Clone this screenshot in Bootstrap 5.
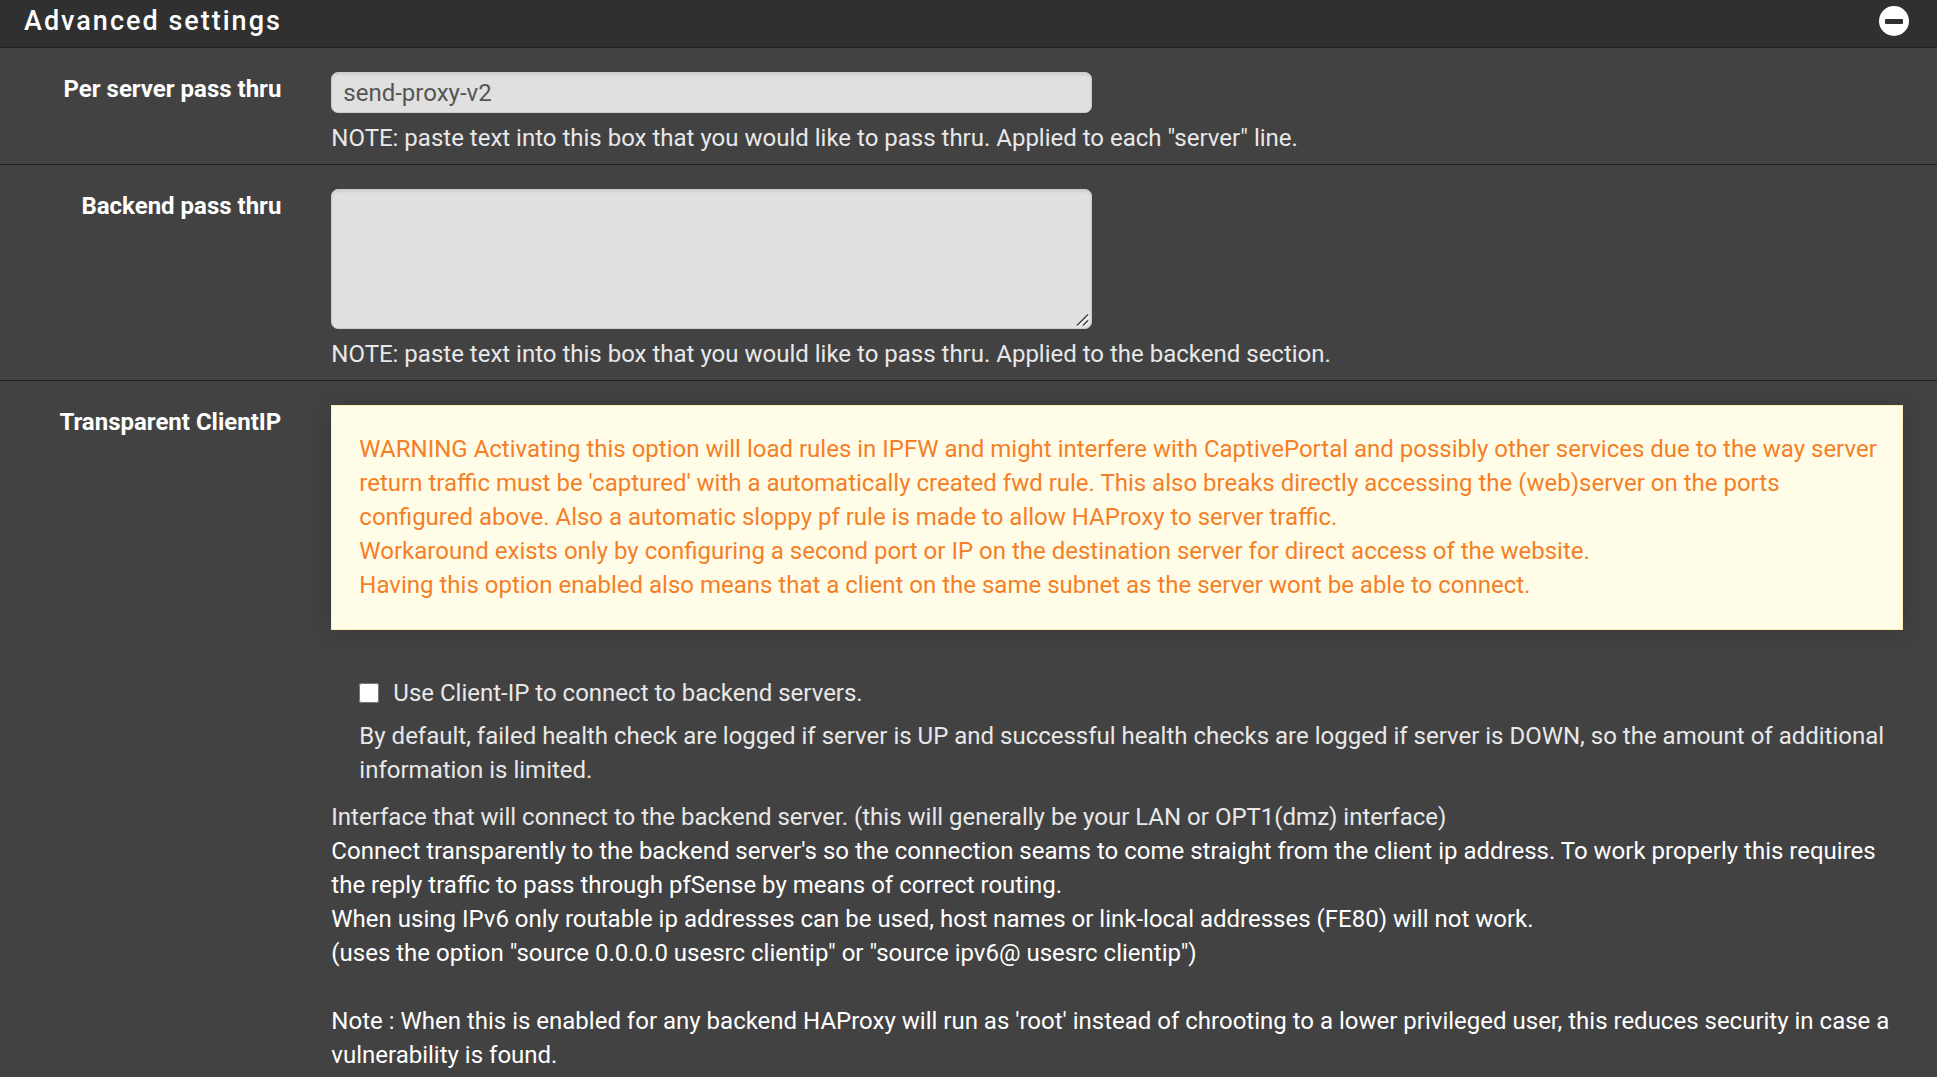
<!DOCTYPE html>
<html lang="en">
<head>
<meta charset="utf-8">
<meta name="viewport" content="width=device-width, initial-scale=1">
<title>Advanced settings</title>
<link href="https://cdn.jsdelivr.net/npm/bootstrap@5.3.0/dist/css/bootstrap.min.css" rel="stylesheet">
<style>
  body {
    background: #424242;
    color: #fff;
    font-family: Roboto, "Liberation Sans", sans-serif;
    font-size: 24px;
    line-height: 34px;
  }
  .panel-head {
    background: #303030;
    border-bottom: 1px solid #212121;
    height: 48px;
    padding: 0 28px 6px 24px;
  }
  .panel-head h2 {
    font-size: 27px;
    font-weight: 500;
    letter-spacing: 2px;
    line-height: 34px;
  }
  .collapse-toggle { line-height: 0; }
  .setting { padding: 24px 34px 9px 7px; }
  .setting + .setting { border-top: 1px solid #212121; }
  .setting:last-child { padding-bottom: 0; }
  .setting .row { --bs-gutter-x: 50px; }
  .setting-label { font-weight: 700; }
  .field {
    background: #e0e0e0;
    border: 1px solid #ccc;
    border-radius: 7px;
    box-shadow: inset 0 2px 2px rgba(0, 0, 0, .08);
    color: #555;
    font-size: 24px;
    height: 41px;
    line-height: 34px;
    padding: 2px 11px;
  }
  .field:focus { background: #e0e0e0; color: #555; }
  .field-tall { height: 140px; resize: both; }
  .field-tall::-webkit-resizer {
    background: url("data:image/svg+xml,%3Csvg xmlns='http://www.w3.org/2000/svg' width='15' height='15' fill='none' stroke-width='1.5'%3E%3Cpath stroke='%23fff' d='M2 13.5L13 3M8 13.5L13 9'/%3E%3Cpath stroke='%23444' d='M1 12.5L12 1.5M7 12.5L12 7.5'/%3E%3C/svg%3E") no-repeat;
  }
  .hint { color: #e8e8e8; }
  .hint-below { margin-top: 8px; }
  .warn-box {
    background: #fffde7;
    border: 1px solid #ffecb3;
    border-radius: 0;
    box-shadow: 0 2px 20px rgba(0, 0, 0, .15);
    color: #f57f27;
    margin-bottom: 46px;
    padding: 26px 22px 27px 27px;
  }
  .option { padding-left: 28px; margin-bottom: 13px; }
  .option-line { gap: 14px; margin-bottom: 9px; }
  .option-line input { height: 20px; width: 20px; }
</style>
<script src="https://cdn.jsdelivr.net/npm/bootstrap@5.3.0/dist/js/bootstrap.bundle.min.js" defer></script>
</head>
<body>
<section>
  <header class="panel-head d-flex align-items-center justify-content-between">
    <h2 class="m-0">Advanced settings</h2>
    <button type="button" class="collapse-toggle btn p-0 border-0" data-bs-toggle="collapse" data-bs-target="#advanced" aria-expanded="true" aria-controls="advanced" aria-label="Collapse advanced settings">
      <svg width="30" height="30" viewBox="0 0 30 30" aria-hidden="true">
        <circle cx="15" cy="15" r="15" fill="#fff"/>
        <rect x="6" y="13" width="18" height="5" rx="1" fill="#303030"/>
      </svg>
    </button>
  </header>
  <form id="advanced" class="collapse show">
    <div class="setting">
      <div class="row">
        <label class="setting-label col-2 text-end" for="server-pass">Per server pass thru</label>
        <div class="col-10">
          <div class="row">
            <div class="col-6"><input id="server-pass" class="field form-control" type="text" value="send-proxy-v2"></div>
          </div>
          <div class="hint hint-below">NOTE: paste text into this box that you would like to pass thru. Applied to each "server" line.</div>
        </div>
      </div>
    </div>
    <div class="setting">
      <div class="row">
        <label class="setting-label col-2 text-end" for="backend-pass">Backend pass thru</label>
        <div class="col-10">
          <div class="row">
            <div class="col-6"><textarea id="backend-pass" class="field field-tall form-control d-block"></textarea></div>
          </div>
          <div class="hint hint-below">NOTE: paste text into this box that you would like to pass thru. Applied to the backend section.</div>
        </div>
      </div>
    </div>
    <div class="setting">
      <div class="row">
        <div class="setting-label col-2 text-end">Transparent ClientIP</div>
        <div class="col-10">
          <div class="warn-box alert" role="alert">
            WARNING Activating this option will load rules in IPFW and might interfere with CaptivePortal and possibly other services due to the way server return traffic must be 'captured' with a automatically created fwd rule. This also breaks directly accessing the (web)server on the ports configured above. Also a automatic sloppy pf rule is made to allow HAProxy to server traffic.<br>
            Workaround exists only by configuring a second port or IP on the destination server for direct access of the website.<br>
            Having this option enabled also means that a client on the same subnet as the server wont be able to connect.
          </div>
          <div class="option hint">
            <div class="option-line d-flex align-items-center">
              <input id="client-ip" type="checkbox">
              <label for="client-ip">Use Client-IP to connect to backend servers.</label>
            </div>
            <div>By default, failed health check are logged if server is UP and successful health checks are logged if server is DOWN, so the amount of additional information is limited.</div>
          </div>
          <div class="hint">Interface that will connect to the backend server. (this will generally be your LAN or OPT1(dmz) interface)</div>
          <div>Connect transparently to the backend server's so the connection seams to come straight from the client ip address. To work properly this requires the reply traffic to pass through pfSense by means of correct routing.<br>
            When using IPv6 only routable ip addresses can be used, host names or link-local addresses (FE80) will not work.<br>
            (uses the option "source 0.0.0.0 usesrc clientip" or "source ipv6@ usesrc clientip")<br>
            <br>
            Note : When this is enabled for any backend HAProxy will run as 'root' instead of chrooting to a lower privileged user, this reduces security in case a vulnerability is found.</div>
        </div>
      </div>
    </div>
  </form>
</section>
</body>
</html>
